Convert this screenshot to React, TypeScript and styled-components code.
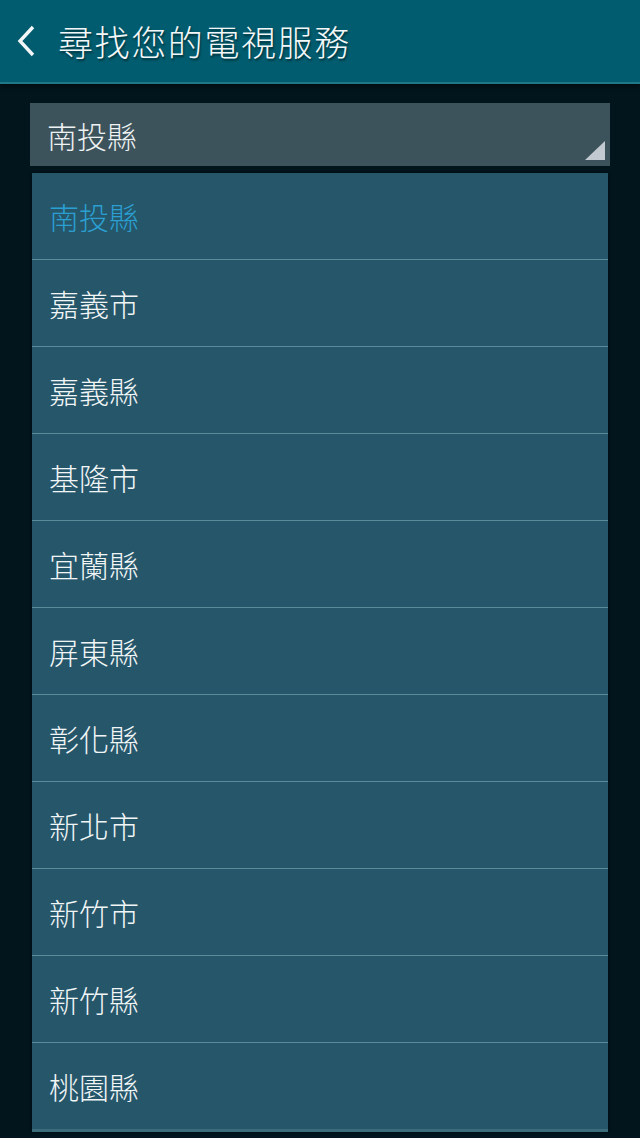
import React from "react";
import styled, { createGlobalStyle } from "styled-components";

const GlobalStyle = createGlobalStyle`
  html, body {
    margin: 0;
    padding: 0;
    background: #02151d;
  }
  body {
    font-family: "Roboto", "Noto Sans CJK TC", sans-serif;
  }
`;

const Screen = styled.div`
  width: 640px;
  height: 1138px;
  background: #02151d;
  overflow: hidden;
  position: relative;
`;

const Header = styled.header`
  height: 82px;
  background: #005c6e;
  border-bottom: 2px solid #1f7886;
  box-shadow: 0 3px 4px rgba(0, 0, 0, 0.4);
  display: flex;
  align-items: center;
  padding-left: 16px;
  gap: 20px;
`;

const Title = styled.h1`
  margin: 0 0 2px 0;
  color: #f4f7f8;
  font-family: "Noto Sans CJK TC", sans-serif;
  font-weight: 300;
  font-size: 35px;
  letter-spacing: 1.6px;
  text-shadow: 1px 2px 2px rgba(0, 0, 0, 0.45);
`;

const Body = styled.main`
  position: relative;
  padding: 19px 30px 0 30px;
  display: flex;
  flex-direction: column;
  gap: 118px;
`;

const Spinner = styled.div`
  height: 63px;
  background: #3d535c;
  display: flex;
  align-items: center;
  padding-left: 17px;
  position: relative;
  color: #eef2f3;
  font-family: "Noto Sans CJK TC", sans-serif;
  font-weight: 300;
  font-size: 30px;
`;

const Corner = styled.svg`
  position: absolute;
  right: 5px;
  bottom: 6px;
`;

const Field = styled.div`
  margin: 0 2px;
  height: 60px;
  border: 1px solid #3c5962;
`;

const Dropdown = styled.ul`
  position: absolute;
  top: 89px;
  left: 32px;
  width: 576px;
  margin: 0;
  padding: 0;
  list-style: none;
  background: #25566a;
  box-shadow: 0 0 3px rgba(0, 0, 0, 0.6);
  border-bottom: 3px solid #3d6d7d;
`;

const Item = styled.li<{ $selected?: boolean }>`
  height: 86px;
  display: flex;
  align-items: center;
  padding-left: 17px;
  border-top: ${(p) => (p.$selected ? "none" : "1px solid #5a8b9a")};
  color: ${(p) => (p.$selected ? "#2b9fd1" : "#f1f5f6")};
  font-family: "Noto Sans CJK TC", sans-serif;
  font-weight: 300;
  font-size: 30px;
`;

const counties = [
  "南投縣",
  "嘉義市",
  "嘉義縣",
  "基隆市",
  "宜蘭縣",
  "屏東縣",
  "彰化縣",
  "新北市",
  "新竹市",
  "新竹縣",
  "桃園縣",
];

const App: React.FC = () => {
  return (
    <>
      <GlobalStyle />
      <Screen>
        <Header>
          <svg width="22" height="34" viewBox="0 0 22 34">
            <path
              d="M17 3 L4 17 L17 31"
              fill="none"
              stroke="#f4f7f8"
              strokeWidth="3.4"
            />
          </svg>
          <Title>尋找您的電視服務</Title>
        </Header>
        <Body>
          <Spinner>
            南投縣
            <Corner width="20" height="19" viewBox="0 0 20 19">
              <polygon points="20,0 20,19 0,19" fill="#c3c9d0" />
            </Corner>
          </Spinner>
          <Field />
          <Dropdown>
            {counties.map((c, i) => (
              <Item key={c} $selected={i === 0}>
                {c}
              </Item>
            ))}
          </Dropdown>
        </Body>
      </Screen>
    </>
  );
};

export default App;
